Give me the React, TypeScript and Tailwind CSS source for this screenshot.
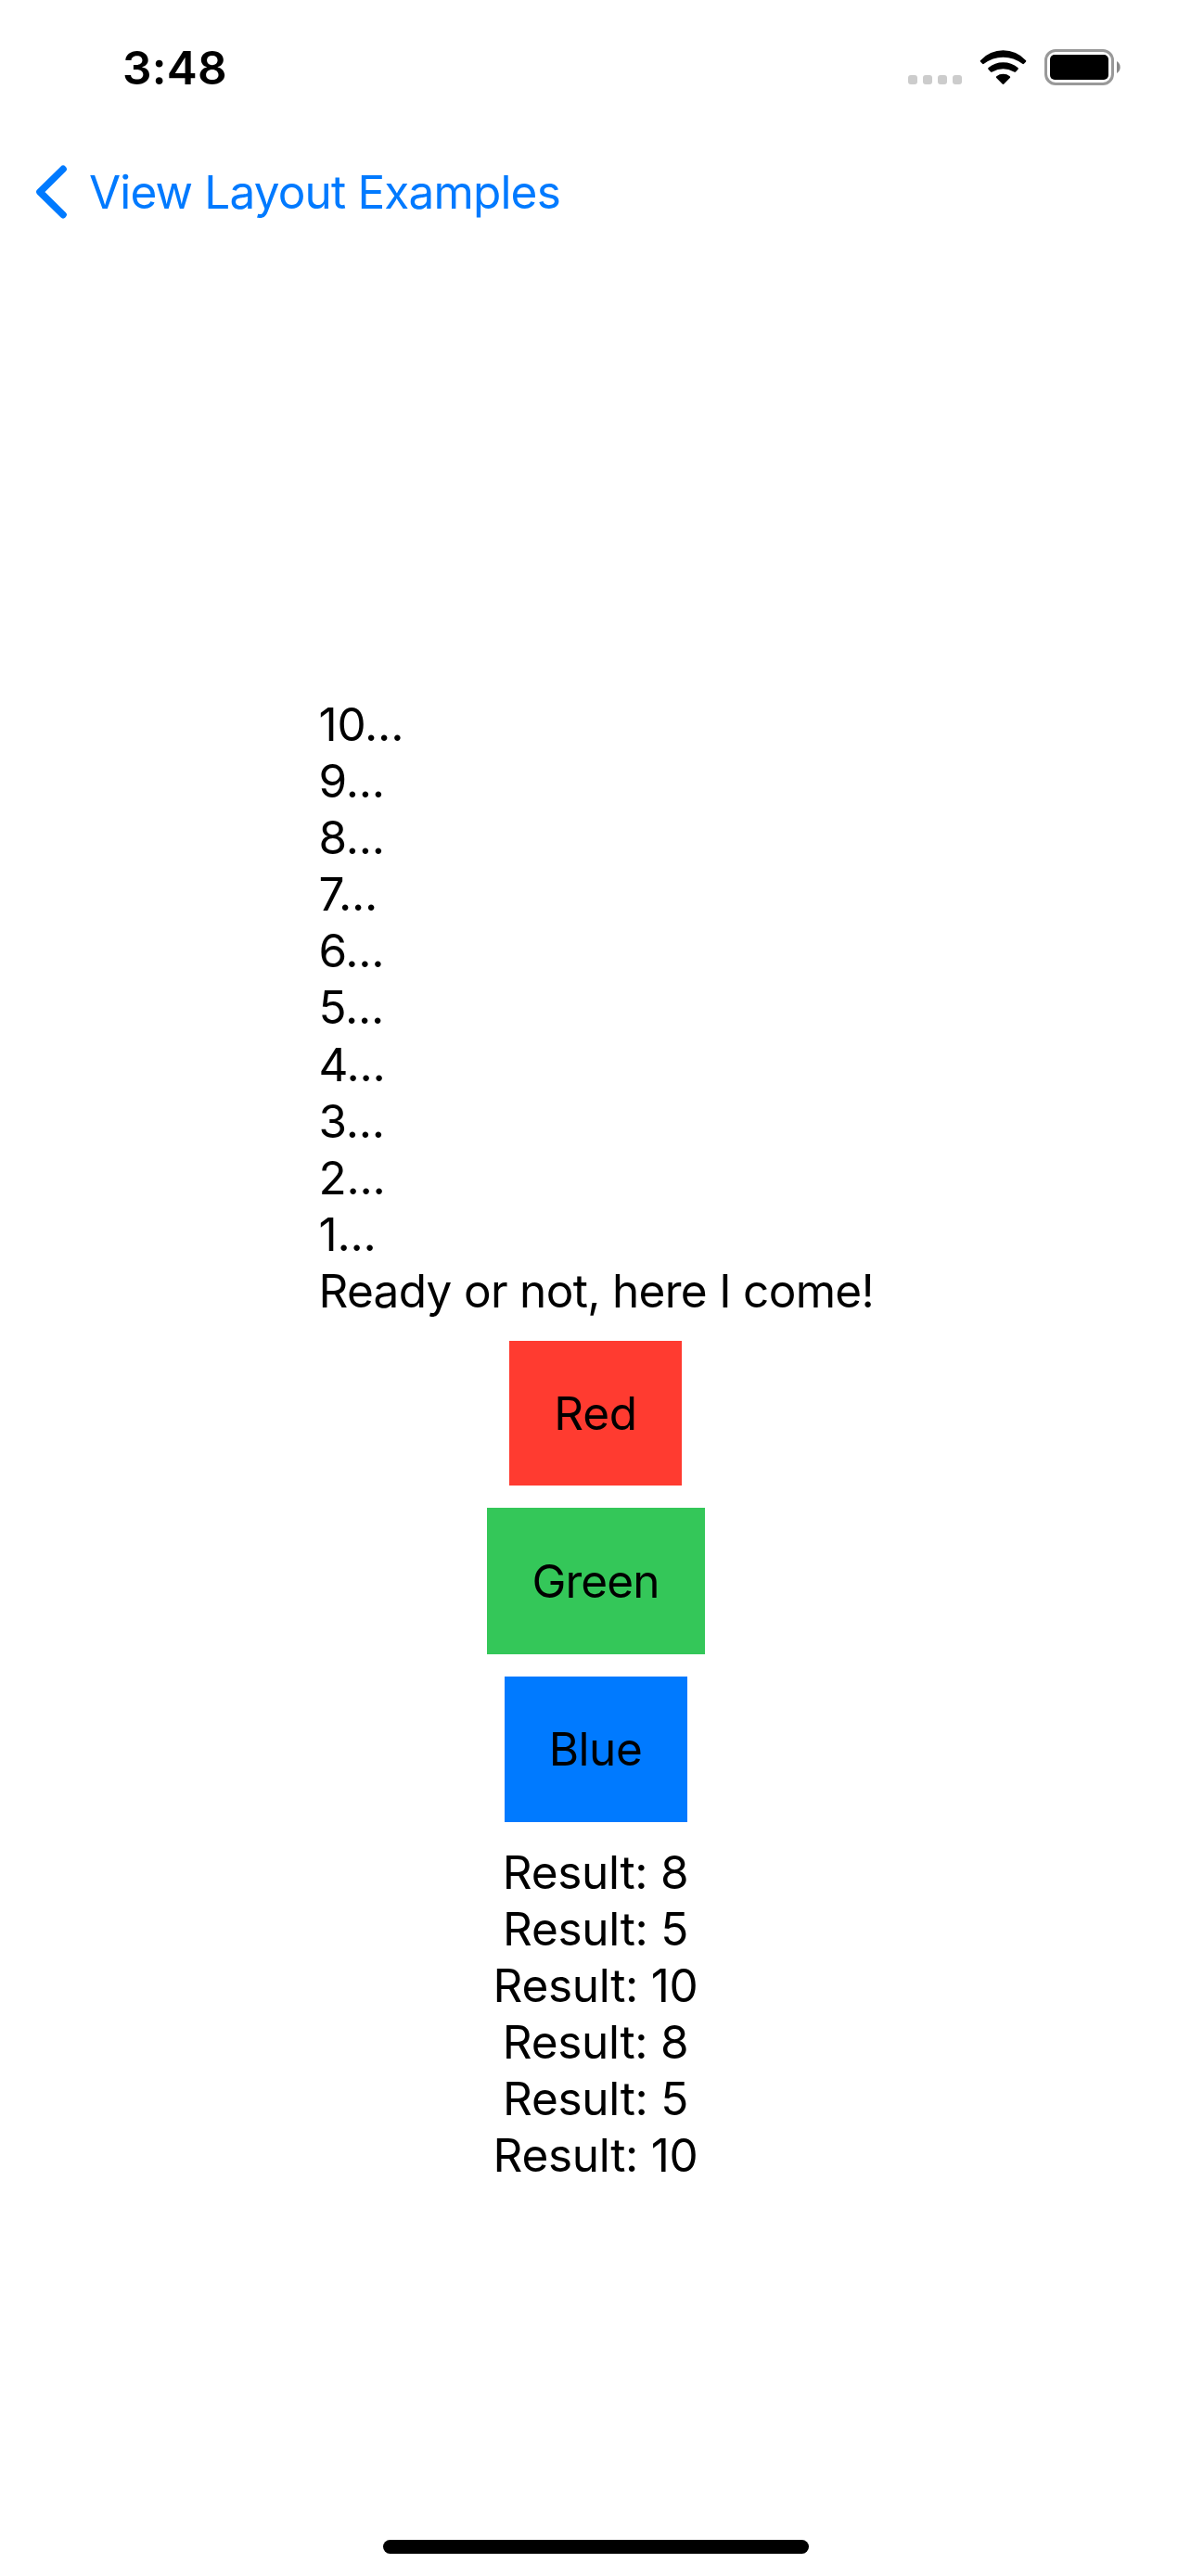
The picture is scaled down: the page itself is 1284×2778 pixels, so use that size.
const countdown = [10, 9, 8, 7, 6, 5, 4, 3, 2, 1];

const swatches = [
  { label: "Red", box: "w-[186px] h-[156px] bg-[#ff3b30]", text: "mt-0.5 tracking-[-0.3px]" },
  { label: "Green", box: "w-[235px] h-[158px] bg-[#34c759]", text: "mt-px tracking-[-0.95px]" },
  { label: "Blue", box: "w-[197px] h-[157px] bg-[#007aff]", text: "mt-px tracking-[-0.5px]" },
];

const results = [8, 5, 10, 8, 5, 10];

function CellularDots() {
  return (
    <svg width="58" height="10" viewBox="0 0 58 10" fill="#cccccc" className="mb-px">
      <rect x="0" width="10" height="10" rx="3" />
      <rect x="16" width="10" height="10" rx="3" />
      <rect x="32" width="10" height="10" rx="3" />
      <rect x="48" width="10" height="10" rx="3" />
    </svg>
  );
}

function Wifi() {
  return (
    <svg width="51" height="38" viewBox="0 0 51 38" className="ml-[19px]">
      <path d="M1.2 10.9 A33 33 0 0 1 49.8 10.9 Q50.8 11.8 49.9 12.7 L47.9 14.8 Q47.1 15.5 46.2 14.8 A33.5 33.5 0 0 0 4.8 14.8 Q3.9 15.5 3.1 14.8 L1.1 12.7 Q0.2 11.8 1.2 10.9Z" />
      <path d="M9.6 19 A24.5 24.5 0 0 1 41.4 19 Q42.4 19.9 41.5 20.8 L39 23.4 Q38.2 24.2 37.2 23.4 A24 24 0 0 0 13.8 23.4 Q12.8 24.2 12 23.4 L9.5 20.8 Q8.6 19.9 9.6 19Z" />
      <path d="M18.3 28.2 A12 12 0 0 1 32.7 28.2 Q33.7 29.1 32.8 30 L26.4 36.5 Q25.5 37.4 24.6 36.5 L18.2 30 Q17.3 29.1 18.3 28.2Z" />
    </svg>
  );
}

function Battery() {
  return (
    <svg width="83" height="39" viewBox="0 0 83 39" className="ml-[19px]">
      <rect x="1.5" y="1.5" width="72" height="36" rx="10.5" fill="none" stroke="#999999" strokeWidth="3" />
      <rect x="6" y="6" width="63" height="27" rx="5" />
      <path d="M78 13 A7.6 7.6 0 0 1 78 26Z" fill="#888888" />
    </svg>
  );
}

export default function App() {
  return (
    <div className="flex h-[2778px] w-[1284px] flex-col overflow-hidden bg-white font-['Inter',sans-serif] text-[49.5px] leading-[61.1px] text-black">
      <header className="flex h-[141px] shrink-0 items-start justify-between pr-[75px] pl-[132px]">
        <time className="mt-[43px] font-semibold tracking-[0.25px]">3:48</time>
        <div className="mt-[53px] flex h-[39px] items-end">
          <CellularDots />
          <Wifi />
          <Battery />
        </div>
      </header>

      <nav className="flex h-[132px] shrink-0 items-center pl-[38px] text-[#007aff]">
        <svg width="35" height="58" viewBox="0 0 35 58" fill="none" stroke="currentColor" strokeWidth="7.6" strokeLinecap="round" strokeLinejoin="round">
          <path d="M30 4.4 L5 29 L30 53.6" />
        </svg>
        <a href="#" className="mt-0.5 ml-[23px] tracking-[-0.84px]">View Layout Examples</a>
      </nav>

      <main className="flex flex-1 flex-col items-center pt-[478px]">
        <ul className="w-[597px] whitespace-nowrap">
          {countdown.map((n) => (
            <li key={n} className="tracking-[-0.25px]">{n}...</li>
          ))}
          <li className="tracking-[-0.69px]">Ready or not, here I come!</li>
        </ul>

        <div className="mt-[23px] flex flex-col items-center gap-6">
          {swatches.map((s) => (
            <div key={s.label} className={`flex items-center justify-center ${s.box}`}>
              <span className={s.text}>{s.label}</span>
            </div>
          ))}
        </div>

        <div className="mt-6 text-center leading-[61px] tracking-[-0.3px]">
          {results.map((r, i) => (
            <p key={i}>Result: {r}</p>
          ))}
        </div>
      </main>

      <footer className="flex h-[39px] shrink-0 justify-center">
        <div className="h-[15px] w-[459px] rounded-full bg-black" />
      </footer>
    </div>
  );
}
